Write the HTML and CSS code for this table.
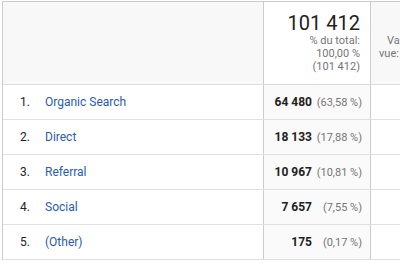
FILE: index.html
```html
<!DOCTYPE html>
<html lang="fr">
<head>
<meta charset="utf-8">
<link rel="stylesheet" href="styles.css">
</head>
<body>
<div class="report">
  <div class="row head">
    <div class="c1"></div>
    <div class="c2">
      <div class="big">101 412</div>
      <div class="sub">% du total:<br>100,00 %<br>(101 412)</div>
    </div>
    <div class="c3">
      <div class="sub"><span class="first">Valeur moy. pour la</span><br>vue: 1,42 (0,00 %)</div>
    </div>
  </div>
  <div class="row">
    <div class="c1"><span class="idx">1.</span><span class="lbl">Organic Search</span></div>
    <div class="c2"><span class="val">64 480</span><span class="pct">(63,58 %)</span></div>
    <div class="c3"></div>
  </div>
  <div class="row">
    <div class="c1"><span class="idx">2.</span><span class="lbl">Direct</span></div>
    <div class="c2"><span class="val">18 133</span><span class="pct">(17,88 %)</span></div>
    <div class="c3"></div>
  </div>
  <div class="row">
    <div class="c1"><span class="idx">3.</span><span class="lbl">Referral</span></div>
    <div class="c2"><span class="val">10 967</span><span class="pct">(10,81 %)</span></div>
    <div class="c3"></div>
  </div>
  <div class="row">
    <div class="c1"><span class="idx">4.</span><span class="lbl">Social</span></div>
    <div class="c2"><span class="val">7 657</span><span class="pct">(7,55 %)</span></div>
    <div class="c3"></div>
  </div>
  <div class="row">
    <div class="c1"><span class="idx">5.</span><span class="lbl">(Other)</span></div>
    <div class="c2"><span class="val">175</span><span class="pct">(0,17 %)</span></div>
    <div class="c3"></div>
  </div>
</div>
</body>
</html>
```

FILE: styles.css
```css
html, body {
  background: #ffffff;
}
body {
  margin: 1px 0 0 2px;
  font-family: Roboto, "Liberation Sans", sans-serif;
  color: #222222;
  overflow: hidden;
}
.report {
  width: 520px;
  border-top: 1px solid #cccccc;
  border-left: 1px solid #cccccc;
}
.row {
  display: flex;
  height: 35px;
  box-sizing: border-box;
  border-bottom: 1px solid #e0e0e0;
}
.row.head {
  height: 83px;
  border-bottom: 1px solid #dddddd;
}
.c1 {
  width: 260px;
  flex: none;
  display: flex;
  align-items: center;
  padding-left: 17px;
  box-sizing: border-box;
  font-size: 12px;
}
.c2 {
  width: 108px;
  flex: none;
  box-sizing: border-box;
  border-left: 1px solid #cccccc;
  border-right: 1px solid #cccccc;
  display: flex;
  align-items: center;
  justify-content: flex-end;
  padding-right: 8px;
  background: #fafafa;
}
.c3 {
  width: 130px;
  flex: none;
  overflow: hidden;
}
.head .c1,
.head .c3 {
  background: #f8f8f8;
}
.head .c2 {
  background: #ffffff;
  display: block;
  padding: 10px 10px 0 0;
  text-align: right;
}
.head .c3 {
  padding: 32px 0 0 8px;
  box-sizing: border-box;
}
.first {
  padding-left: 8px;
}
.big {
  font-size: 20px;
  line-height: 22px;
  color: #212121;
}
.sub {
  font-size: 11px;
  line-height: 13px;
  color: #757575;
  white-space: nowrap;
}
.idx {
  width: 25px;
  color: #222222;
}
.lbl {
  color: #2a5caa;
}
.val {
  font-size: 12px;
  font-weight: 700;
  color: #212121;
}
.pct {
  display: inline-block;
  width: 50px;
  text-align: right;
  font-size: 11px;
  color: #757575;
}
```
